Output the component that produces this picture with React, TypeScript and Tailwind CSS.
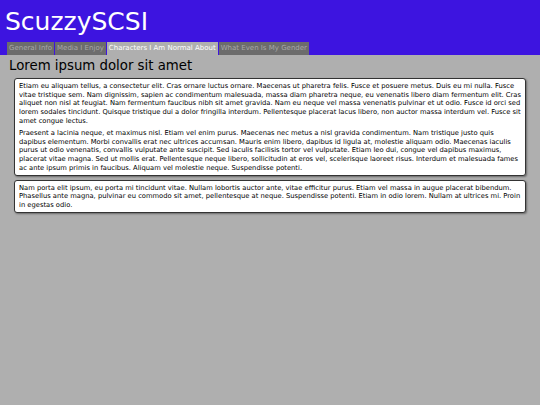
import React from "react";

const tabs = [
  { label: "General Info", active: false },
  { label: "Media I Enjoy", active: false },
  { label: "Characters I Am Normal About", active: true },
  { label: "What Even Is My Gender", active: false },
];

export default function App() {
  return (
    <div className="w-[540px] h-[405px] bg-[#afafaf] overflow-hidden" style={{ fontFamily: '"DejaVu Sans", Verdana, sans-serif' }}>
      <div className="bg-[#3d14e0] pl-[7px] pt-[4px]">
        <div className="text-white text-[25px] leading-[36px] -ml-[2px] mb-[2px]">ScuzzySCSI</div>
        <div className="flex gap-px">
          {tabs.map((t) => (
            <div
              key={t.label}
              className={
                t.active
                  ? "bg-[#afafaf] text-white text-[7px] leading-[13px] px-[2px]"
                  : "bg-[#6c6c6c] text-[#a8a8a8] text-[7px] leading-[13px] px-[2px]"
              }
            >
              {t.label}
            </div>
          ))}
        </div>
      </div>
      <div className="px-[14px] pt-[2px]">
        <h1 className="text-[13.3px] leading-[18px] text-black -ml-[5px] mb-[3px]">Lorem ipsum dolor sit amet</h1>
        <div className="bg-white border border-[#333] rounded-[3px] shadow-[1px_1px_2px_rgba(0,0,0,0.4)] px-[4px] pt-[3px] pb-[2px] text-[6.75px] leading-[8.7px] text-black">
          <p className="mb-[3.5px]">
            Etiam eu aliquam tellus, a consectetur elit. Cras ornare luctus ornare. Maecenas ut pharetra felis. Fusce et posuere metus. Duis eu mi nulla. Fusce vitae tristique sem. Nam dignissim, sapien ac condimentum malesuada, massa diam pharetra neque, eu venenatis libero diam fermentum elit. Cras aliquet non nisl at feugiat. Nam fermentum faucibus nibh sit amet gravida. Nam eu neque vel massa venenatis pulvinar et ut odio. Fusce id orci sed lorem sodales tincidunt. Quisque tristique dui a dolor fringilla interdum. Pellentesque placerat lacus libero, non auctor massa interdum vel. Fusce sit amet congue lectus.
          </p>
          <p>
            Praesent a lacinia neque, et maximus nisl. Etiam vel enim purus. Maecenas nec metus a nisl gravida condimentum. Nam tristique justo quis dapibus elementum. Morbi convallis erat nec ultrices accumsan. Mauris enim libero, dapibus id ligula at, molestie aliquam odio. Maecenas iaculis purus ut odio venenatis, convallis vulputate ante suscipit. Sed iaculis facilisis tortor vel vulputate. Etiam leo dui, congue vel dapibus maximus, placerat vitae magna. Sed ut mollis erat. Pellentesque neque libero, sollicitudin at eros vel, scelerisque laoreet risus. Interdum et malesuada fames ac ante ipsum primis in faucibus. Aliquam vel molestie neque. Suspendisse potenti.
          </p>
        </div>
        <div className="mt-[4px] bg-white border border-[#333] rounded-[3px] shadow-[1px_1px_2px_rgba(0,0,0,0.4)] px-[4px] pt-[3px] pb-[2px] text-[6.75px] leading-[8.7px] text-black">
          <p>
            Nam porta elit ipsum, eu porta mi tincidunt vitae. Nullam lobortis auctor ante, vitae efficitur purus. Etiam vel massa in augue placerat bibendum. Phasellus ante magna, pulvinar eu commodo sit amet, pellentesque at neque. Suspendisse potenti. Etiam in odio lorem. Nullam at ultrices mi. Proin in egestas odio.
          </p>
        </div>
      </div>
    </div>
  );
}
